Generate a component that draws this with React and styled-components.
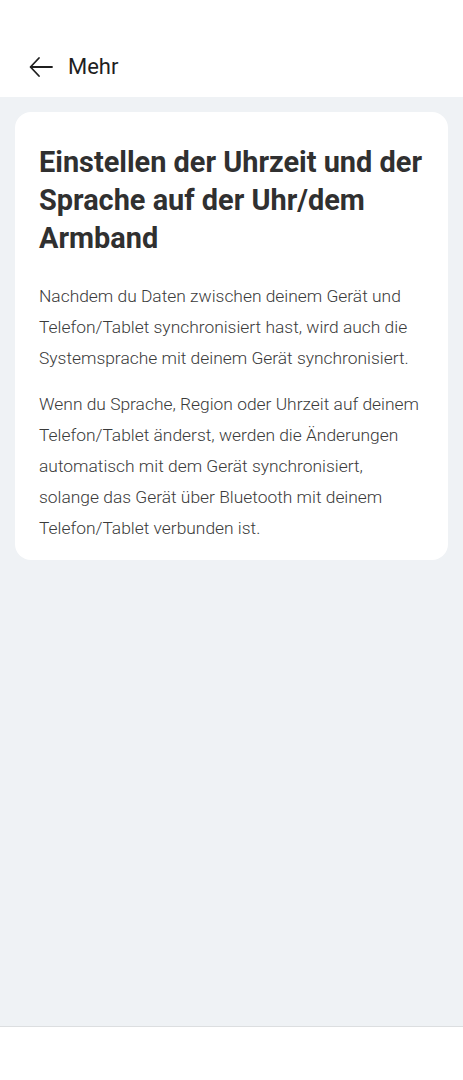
import React from "react";
import styled, { createGlobalStyle } from "styled-components";

const Global = createGlobalStyle`
  html, body { margin: 0; padding: 0; background: #ffffff; }
  body { font-family: Roboto, "Noto Sans", sans-serif; }
`;

const Screen = styled.div`
  display: flex;
  flex-direction: column;
  height: 1080px;
  background: #ffffff;
`;

const Header = styled.header`
  height: 97px;
  flex: none;
  display: flex;
  align-items: center;
  gap: 13px;
  padding: 36px 0 0 27px;
  box-sizing: border-box;
  background: #ffffff;
`;

const BackButton = styled.button`
  border: none;
  background: none;
  padding: 0;
  width: 28px;
  height: 28px;
  display: flex;
  align-items: center;
  justify-content: center;
  color: #1f1f1f;
`;

const HeaderTitle = styled.h1`
  margin: 0;
  font-size: 22px;
  font-weight: 400;
  color: #1f1f1f;
`;

const Content = styled.main`
  flex: 1;
  background: #eff2f5;
  padding: 15px 15px;
  border-bottom: 1px solid #dcdee0;
`;

const Card = styled.section`
  background: #ffffff;
  border-radius: 16px;
  padding: 31px 24px 16px 24px;
`;

const Title = styled.h2`
  margin: 0 0 24px 0;
  font-size: 28.9px;
  line-height: 38px;
  font-weight: 700;
  color: #303030;
`;

const Paragraph = styled.p`
  margin: 0 0 15px 0;
  font-size: 17.4px;
  line-height: 31px;
  font-weight: 300;
  color: #3a3a3a;
  &:last-child { margin-bottom: 0; }
`;

const Footer = styled.div`
  height: 53px;
  flex: none;
  background: #ffffff;
`;

export default function App() {
  return (
    <Screen>
      <Global />
      <Header>
        <BackButton aria-label="Zurück">
          <svg width="26" height="24" viewBox="0 0 26 24" fill="none" stroke="currentColor" strokeWidth="1.8" strokeLinecap="round" strokeLinejoin="round">
            <path d="M24 12H3" />
            <path d="M11 3L2.5 12L11 21" />
          </svg>
        </BackButton>
        <HeaderTitle>Mehr</HeaderTitle>
      </Header>
      <Content>
        <Card>
          <Title>Einstellen der Uhrzeit und der Sprache auf der Uhr/dem Armband</Title>
          <Paragraph>
            Nachdem du Daten zwischen deinem Gerät und Telefon/Tablet synchronisiert hast, wird auch die Systemsprache mit deinem Gerät synchronisiert.
          </Paragraph>
          <Paragraph>
            Wenn du Sprache, Region oder Uhrzeit auf deinem Telefon/Tablet änderst, werden die Änderungen automatisch mit dem Gerät synchronisiert, solange das Gerät über Bluetooth mit deinem Telefon/Tablet verbunden ist.
          </Paragraph>
        </Card>
      </Content>
      <Footer />
    </Screen>
  );
}
